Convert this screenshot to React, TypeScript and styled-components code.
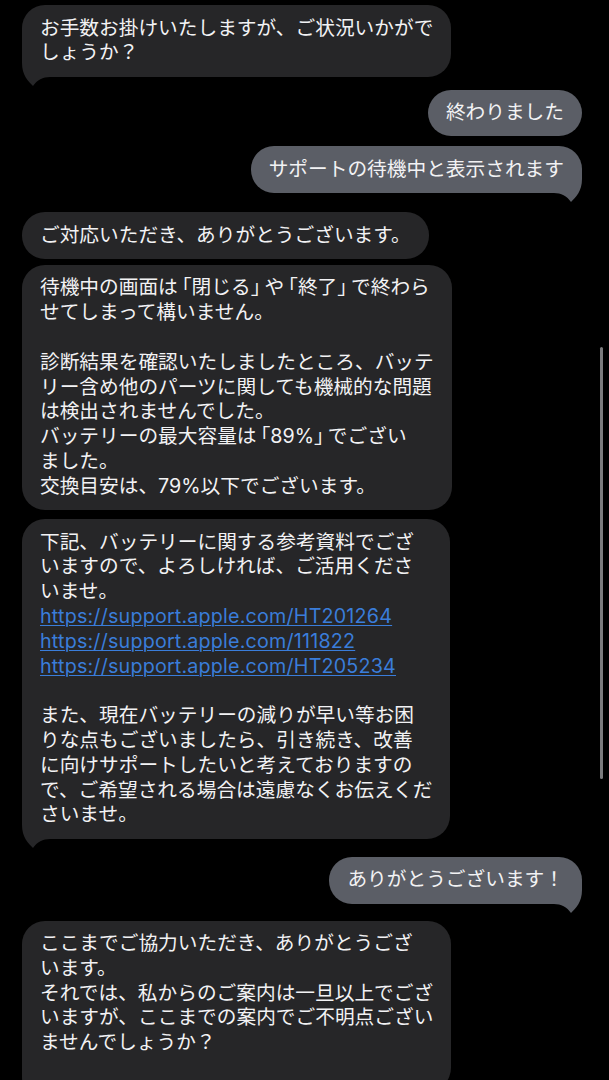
import styled, { createGlobalStyle } from 'styled-components';

type Side = 'in' | 'out';

interface Message {
  side: Side;
  tail?: boolean;
  gap: number;
  lines: string[];
}

const GlobalStyle = createGlobalStyle`
  html, body {
    margin: 0;
    padding: 0;
    background: #000;
    overflow: hidden;
  }
  * {
    box-sizing: border-box;
  }
`;

const messages: Message[] = [
  {
    side: 'in',
    tail: true,
    gap: 5,
    lines: ['お手数お掛けいたしますが、ご状況いかがで', 'しょうか？'],
  },
  { side: 'out', gap: 13, lines: ['終わりました'] },
  { side: 'out', tail: true, gap: 10, lines: ['サポートの待機中と表示されます'] },
  { side: 'in', gap: 19, lines: ['ご対応いただき、ありがとうございます。'] },
  {
    side: 'in',
    gap: 6,
    lines: [
      '待機中の画面は「閉じる」や「終了」で終わら',
      'せてしまって構いません。',
      '',
      '診断結果を確認いたしましたところ、バッテ',
      'リー含め他のパーツに関しても機械的な問題',
      'は検出されませんでした。',
      'バッテリーの最大容量は「89%」でござい',
      'ました。',
      '交換目安は、79%以下でございます。',
    ],
  },
  {
    side: 'in',
    tail: true,
    gap: 9,
    lines: [
      '下記、バッテリーに関する参考資料でござ',
      'いますので、よろしければ、ご活用くださ',
      'いませ。',
      'https://support.apple.com/HT201264',
      'https://support.apple.com/111822',
      'https://support.apple.com/HT205234',
      '',
      'また、現在バッテリーの減りが早い等お困',
      'りな点もございましたら、引き続き、改善',
      'に向けサポートしたいと考えておりますの',
      'で、ご希望される場合は遠慮なくお伝えくだ',
      'さいませ。',
    ],
  },
  { side: 'out', tail: true, gap: 18, lines: ['ありがとうございます！'] },
  {
    side: 'in',
    tail: true,
    gap: 17,
    lines: [
      'ここまでご協力いただき、ありがとうござ',
      'います。',
      'それでは、私からのご案内は一旦以上でござ',
      'いますが、ここまでの案内でご不明点ござい',
      'ませんでしょうか？',
      '',
    ],
  },
];

const Screen = styled.div`
  position: relative;
  width: 609px;
  height: 1080px;
  overflow: hidden;
  background: #000;
  display: flex;
  flex-direction: column;
  padding: 0 27px 0 22px;
`;

const Row = styled.div<{ $side: Side; $gap: number }>`
  display: flex;
  justify-content: ${(p) => (p.$side === 'in' ? 'flex-start' : 'flex-end')};
  margin-top: ${(p) => p.$gap}px;
`;

const Bubble = styled.div<{ $side: Side }>`
  position: relative;
  background: ${(p) => (p.$side === 'in' ? '#262628' : '#5b5e66')};
  color: #f2f2f4;
  border-radius: 23px;
  padding: 10.5px 18px 11.5px;
  font-family: Inter, 'Noto Sans CJK JP', sans-serif;
  font-size: 19.7px;
  line-height: 24.8px;
`;

const Line = styled.div`
  position: relative;
  z-index: 1;
  white-space: nowrap;
  min-height: 24.8px;
`;

const Bracket = styled.span<{ $open: boolean }>`
  font-feature-settings: 'halt';
  ${(p) => (p.$open ? 'margin-left: 0.2em;' : 'margin-right: 0.2em;')}
`;

const Link = styled.a`
  color: #3a7dda;
  letter-spacing: 0.2px;
  text-decoration: underline;
  text-decoration-thickness: 1px;
  text-underline-offset: 2px;
`;

const TailSvg = styled.svg<{ $side: Side }>`
  position: absolute;
  z-index: 0;
  bottom: -10px;
  width: 28px;
  height: 33px;
  ${(p) => (p.$side === 'in' ? 'left: 0;' : 'right: 0; transform: scaleX(-1);')}
`;

const ScrollThumb = styled.div`
  position: absolute;
  right: 6px;
  top: 347px;
  width: 3px;
  height: 432px;
  border-radius: 2px;
  background: #7b7b7d;
`;

const Tail: React.FC<{ side: Side }> = ({ side }) => (
  <TailSvg $side={side} viewBox="0 0 28 33">
    <path
      d="M0 0 H28 V23 C21 23 15 26 11 32 C6 27 0 21 0 9 Z"
      fill={side === 'in' ? '#262628' : '#5b5e66'}
    />
  </TailSvg>
);

// narrow the Japanese corner brackets the way the chat view squeezes them
const renderText = (text: string) =>
  text.split(/([「」])/).map((part, k) =>
    part === '「' || part === '」' ? (
      <Bracket key={k} $open={part === '「'}>
        {part}
      </Bracket>
    ) : (
      part
    ),
  );

const App: React.FC = () => {
  return (
    <>
      <GlobalStyle />
      <Screen>
        {messages.map((m, i) => (
          <Row key={i} $side={m.side} $gap={m.gap}>
            <Bubble $side={m.side}>
              {m.tail && <Tail side={m.side} />}
              {m.lines.map((line, j) => (
                <Line key={j}>
                  {line.startsWith('https://') ? (
                    <Link href={line}>{line}</Link>
                  ) : line ? (
                    renderText(line)
                  ) : (
                    '\u00a0'
                  )}
                </Line>
              ))}
            </Bubble>
          </Row>
        ))}
        <ScrollThumb />
      </Screen>
    </>
  );
};

export default App;
